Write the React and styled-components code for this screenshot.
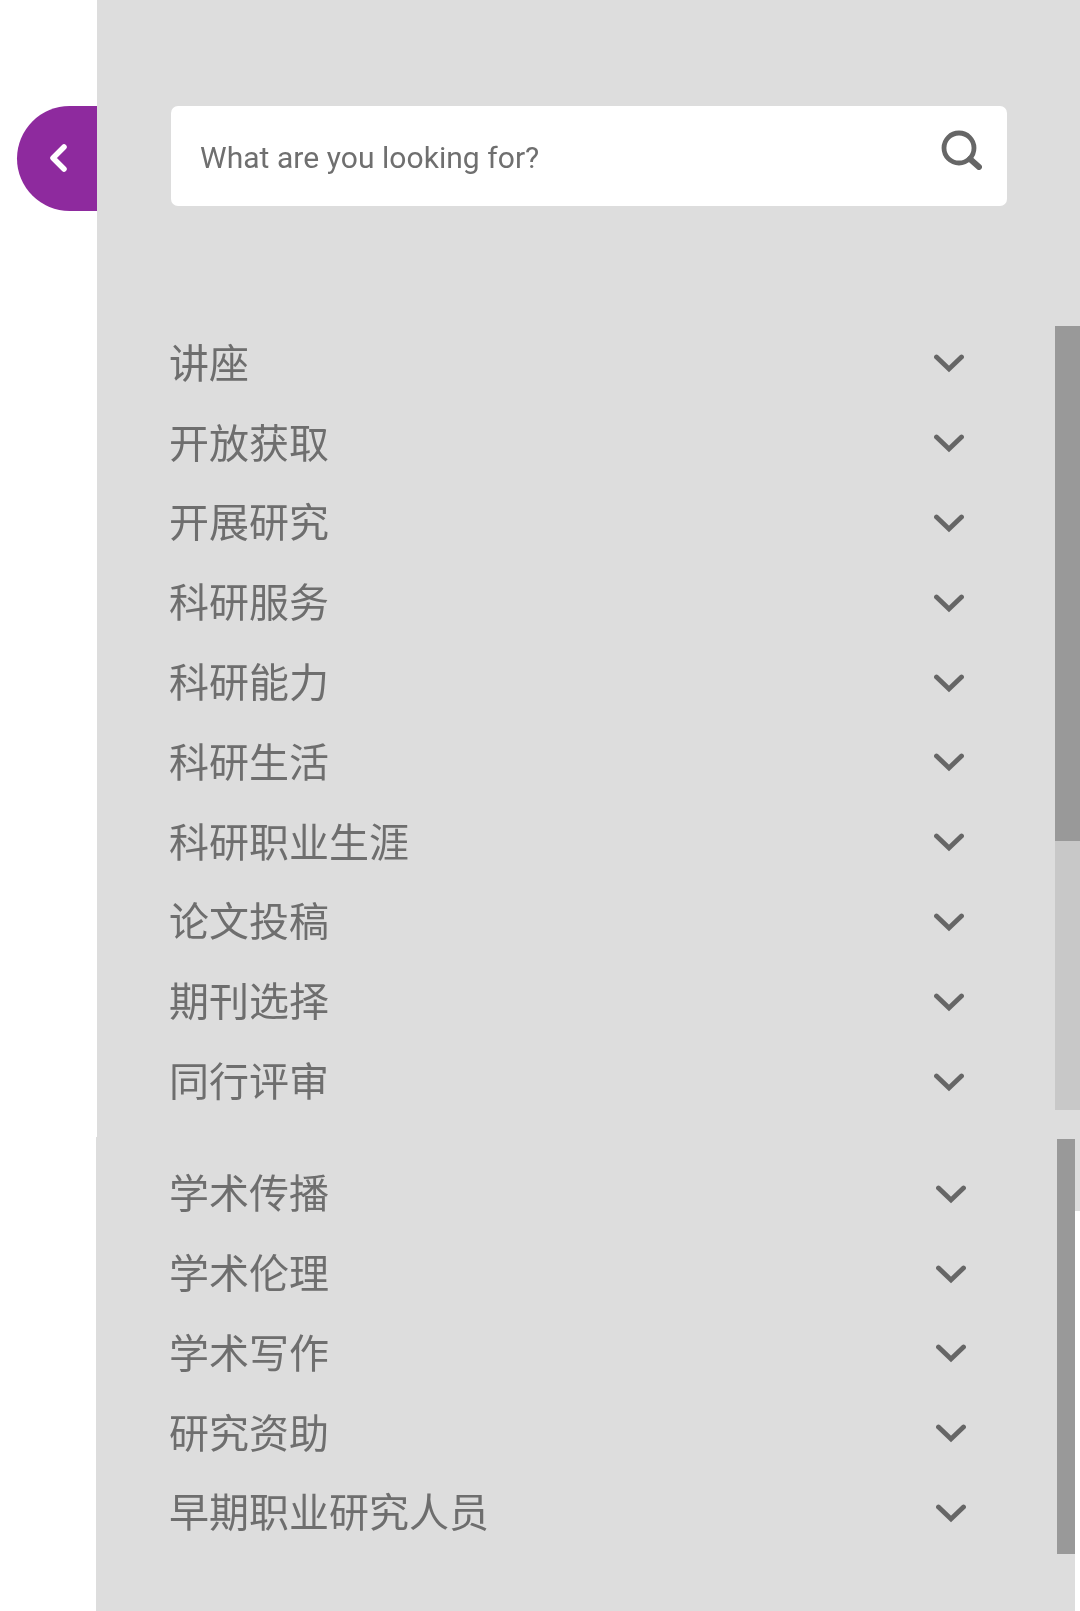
import React from "react";
import styled, { createGlobalStyle } from "styled-components";

const Global = createGlobalStyle`
  html, body { margin: 0; padding: 0; background: #fff; }
  * { box-sizing: border-box; }
`;

const Page = styled.div`
  display: flex;
  width: 1080px;
  height: 1611px;
  overflow: hidden;
  background: #fff;
`;

const Gutter = styled.div`
  flex: 0 0 97px;
  padding: 106px 0 0 17px;
`;

const Tab = styled.button`
  display: flex;
  align-items: center;
  justify-content: center;
  width: 80px;
  height: 105px;
  padding: 0 0 2px 2px;
  border: 0;
  border-radius: 53px 0 0 53px;
  background: #8e2a9e;
`;

const TabIcon = styled.svg`
  filter: blur(0.7px);
`;

const Panel = styled.div`
  flex: 1;
  display: flex;
  flex-direction: column;
`;

const Section = styled.section`
  position: relative;
  background: #ddd;
  height: ${p => p.$height}px;
  margin-left: ${p => p.$shift || 0}px;
  margin-right: ${p => p.$trim || 0}px;
  padding: ${p => p.$pad}px 0 0 ${p => p.$left}px;
`;

const Corner = styled.div`
  position: absolute;
  right: -5px;
  top: 0;
  width: 5px;
  height: 74px;
  background: #ddd;
`;

const SearchBox = styled.div`
  display: flex;
  align-items: center;
  justify-content: space-between;
  width: 836px;
  height: 100px;
  margin: 0 0 115px 1.5px;
  padding: 0 24px 0 29.5px;
  background: #fff;
  border-radius: 7px;
`;

const Placeholder = styled.span`
  font: 400 30px/1 Roboto, "Liberation Sans", sans-serif;
  letter-spacing: 0.05px;
  color: #6f6f6f;
  padding-top: 4px;
  filter: blur(0.6px);
`;

const SearchIcon = styled.svg`
  margin-bottom: 10px;
  filter: blur(0.6px);
`;

const List = styled.ul`
  list-style: none;
  margin: 0;
  padding: 0;
  width: ${p => p.$width}px;
`;

const Row = styled.li`
  display: flex;
  align-items: center;
  justify-content: space-between;
  height: 79.8px;
`;

const Label = styled.span`
  font: 400 40px/1 "Noto Sans CJK SC", "Noto Sans", sans-serif;
  color: #6e6e6e;
  filter: blur(0.5px);
`;

const ChevronIcon = styled.svg`
  margin-top: 6px;
  filter: blur(0.6px);
`;

const Track = styled.div`
  position: absolute;
  top: ${p => p.$top}px;
  right: 0;
  width: ${p => p.$w}px;
  height: ${p => p.$h}px;
  background: ${p => p.$bg};
`;

const Chevron = () => (
  <ChevronIcon width="30" height="19" viewBox="0 0 30 19" fill="none" stroke="#666" strokeWidth="4.8" strokeLinecap="round">
    <polyline points="2.5,3 15,15 27.5,3" />
  </ChevronIcon>
);

const first = ["讲座", "开放获取", "开展研究", "科研服务", "科研能力", "科研生活", "科研职业生涯", "论文投稿", "期刊选择", "同行评审"];
const second = ["学术传播", "学术伦理", "学术写作", "研究资助", "早期职业研究人员"];

export default function App() {
  return (
    <Page>
      <Global />
      <Gutter>
        <Tab aria-label="collapse">
          <TabIcon width="20" height="30" viewBox="0 0 20 30" fill="none" stroke="#fff" strokeWidth="5.5" strokeLinecap="round" strokeLinejoin="round">
            <polyline points="16,4 5,15 16,26" />
          </TabIcon>
        </Tab>
      </Gutter>
      <Panel>
        <Section $height={1137} $pad={106} $left={72}>
          <SearchBox>
            <Placeholder>What are you looking for?</Placeholder>
            <SearchIcon width="42" height="42" viewBox="0 0 42 42" fill="none" stroke="#666" strokeLinecap="round">
              <circle cx="18" cy="18" r="15" strokeWidth="4.8" />
              <line x1="29" y1="29" x2="38" y2="37" strokeWidth="6" />
            </SearchIcon>
          </SearchBox>
          <List $width={795}>
            {first.map(t => (
              <Row key={t}><Label>{t}</Label><Chevron /></Row>
            ))}
          </List>
          <Track $top={326} $w={25} $h={784} $bg="#c8c8c8" />
          <Track $top={326} $w={25} $h={515} $bg="#999" />
        </Section>
        <Section $height={474} $pad={14.4} $left={73} $shift={-1} $trim={5}>
          <Corner />
          <List $width={797}>
            {second.map(t => (
              <Row key={t}><Label>{t}</Label><Chevron /></Row>
            ))}
          </List>
          <Track $top={2} $w={18} $h={415} $bg="#999" />
        </Section>
      </Panel>
    </Page>
  );
}
